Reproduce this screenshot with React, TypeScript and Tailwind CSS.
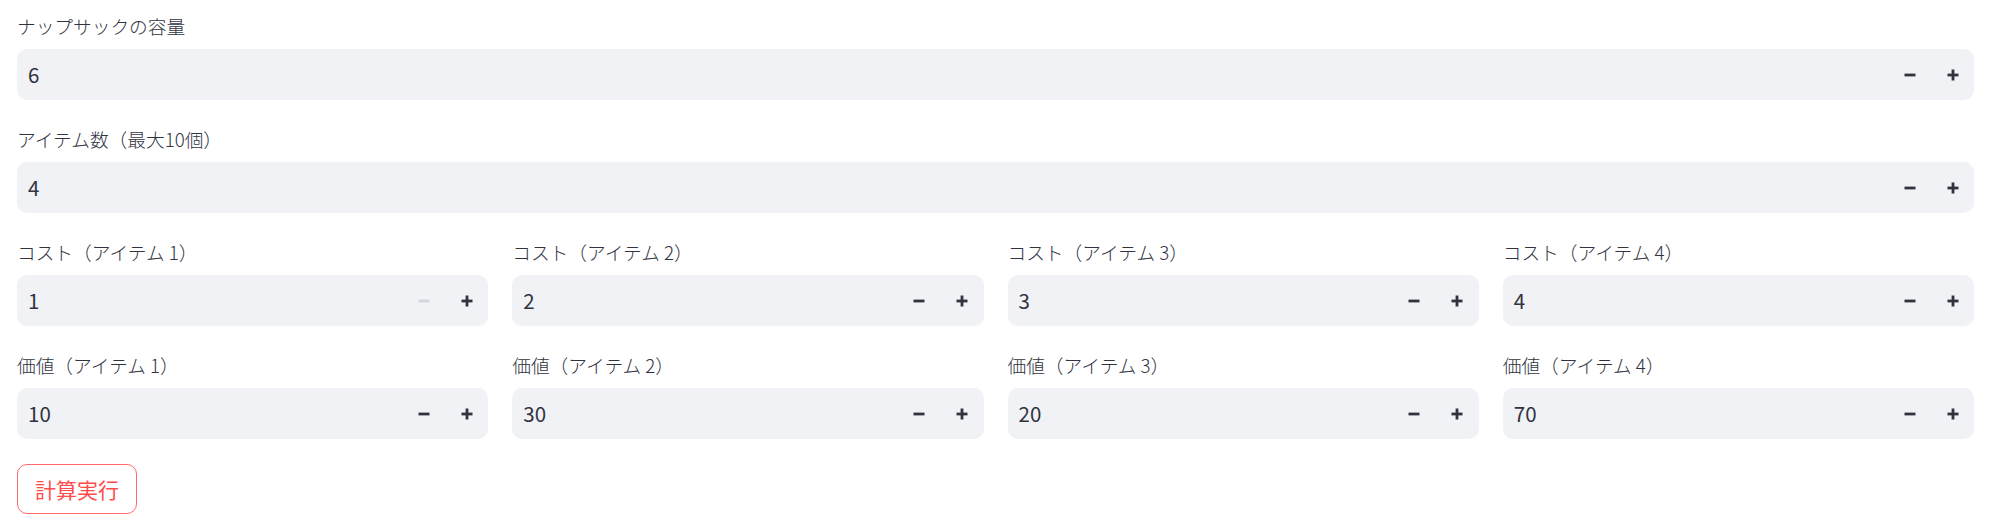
import React from "react";

const FONT = { fontFamily: '"Noto Sans CJK JP", "Noto Sans", sans-serif' };

function Minus({ disabled }: { disabled?: boolean }) {
  return (
    <svg width="12" height="12" viewBox="0 0 12 12" className={disabled ? "text-[#d3d5db]" : "text-[#31333f]"}>
      <rect x="0.5" y="4.6" width="11" height="2.8" fill="currentColor" />
    </svg>
  );
}

function Plus() {
  return (
    <svg width="12" height="12" viewBox="0 0 12 12" className="text-[#31333f]">
      <rect x="0.5" y="4.6" width="11" height="2.8" fill="currentColor" />
      <rect x="4.6" y="0.5" width="2.8" height="11" fill="currentColor" />
    </svg>
  );
}

function NumberInput({ label, value, minDisabled }: { label: string; value: string; minDisabled?: boolean }) {
  return (
    <div className="flex flex-col min-w-0">
      <div className="h-[27px] leading-[27px] mb-[10px] text-[18.7px] font-light text-[#31333f] whitespace-pre">{label}</div>
      <div className="h-[51px] rounded-[10px] bg-[#f0f2f6] flex items-center">
        <div className="flex-1 pl-[11px] text-[20.5px] text-[#31333f] leading-none">{value}</div>
        <div className="w-[43px] h-full flex items-center justify-center">
          <Minus disabled={minDisabled} />
        </div>
        <div className="w-[43px] h-full flex items-center justify-center">
          <Plus />
        </div>
      </div>
    </div>
  );
}

export default function App() {
  const costs = ["1", "2", "3", "4"];
  const values = ["10", "30", "20", "70"];
  return (
    <div className="w-[2002px] h-[529px] bg-white pl-[17px] pr-[28px] pt-[12px] flex flex-col gap-[25px]" style={FONT}>
      <NumberInput label="ナップサックの容量" value="6" />
      <NumberInput label="アイテム数（最大10個）" value="4" />
      <div className="grid grid-cols-4 gap-x-[24px]">
        {costs.map((c, i) => (
          <NumberInput key={i} label={`コスト（アイテム ${i + 1}）`} value={c} minDisabled={i === 0} />
        ))}
      </div>
      <div className="grid grid-cols-4 gap-x-[24px]">
        {values.map((v, i) => (
          <NumberInput key={i} label={`価値（アイテム ${i + 1}）`} value={v} />
        ))}
      </div>
      <div>
        <button className="h-[50px] px-[17px] border border-[#ff6b6b] rounded-[10px] text-[21px] font-normal text-[#ff4b4b] bg-white leading-none">
          計算実行
        </button>
      </div>
    </div>
  );
}
